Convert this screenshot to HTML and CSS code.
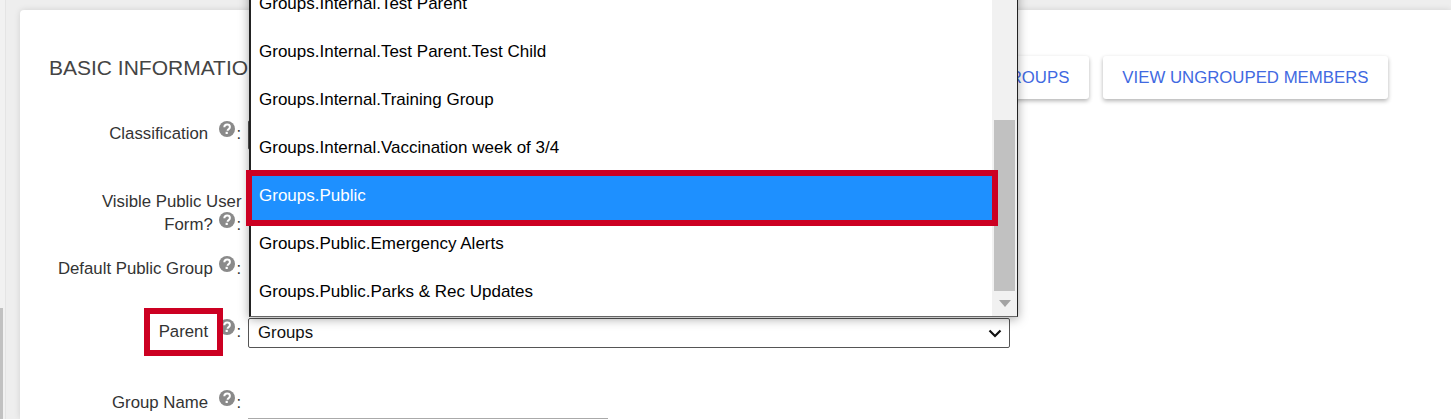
FILE: index.html
```html
<!DOCTYPE html>
<html lang="en">
<head>
    <meta charset="UTF-8">
    <meta name="viewport" content="width=device-width, initial-scale=1.0">
    <title>Group Details</title>
    <link rel="stylesheet" href="styles.css">
</head>
<body>
    <svg class="icon-defs" width="0" height="0">
        <symbol id="help" viewBox="0 0 16 16">
            <circle cx="8" cy="8" r="8" fill="#8a8a8a"/>
            <path d="M5.3 6.2C5.4 4.5 6.6 3.6 8.1 3.6c1.6 0 2.8 1 2.8 2.4 0 1.2-.7 1.8-1.5 2.3-.6.4-.8.7-.8 1.4" fill="none" stroke="#fff" stroke-width="2"/>
            <rect x="6.6" y="10.8" width="2.2" height="2.2" fill="#fff"/>
        </symbol>
    </svg>

    <div class="page">
        <div class="side-strip"><div class="side-thumb"></div></div>

        <div class="card">
            <div class="card-header">
                <h2>BASIC INFORMATION</h2>
                <div class="header-buttons">
                    <button class="flat-button">VIEW ALL GROUPS</button>
                    <button class="flat-button">VIEW UNGROUPED MEMBERS</button>
                </div>
            </div>

            <div class="form">
                <div class="row">
                    <div class="label">Classification &nbsp;<svg class="help"><use href="#help"/></svg><span class="colon">:</span></div>
                    <select class="control wide"><option>Public</option></select>
                </div>
                <div class="row">
                    <div class="label">Visible Public User Form? <svg class="help"><use href="#help"/></svg><span class="colon">:</span></div>
                </div>
                <div class="row">
                    <div class="label">Default Public Group <svg class="help"><use href="#help"/></svg><span class="colon">:</span></div>
                </div>
                <div class="row">
                    <div class="label"><span class="marked">Parent</span> &nbsp;<svg class="help"><use href="#help"/></svg><span class="colon">:</span></div>
                    <div class="control wide parent-select">
                        <span>Groups</span>
                        <svg width="14" height="9" viewBox="0 0 14 9"><path d="M1.5 1.5 7 7l5.5-5.5" fill="none" stroke="#111" stroke-width="2.2"/></svg>
                    </div>
                </div>
                <div class="row">
                    <div class="label">Group Name &nbsp;<svg class="help"><use href="#help"/></svg><span class="colon">:</span></div>
                    <input class="name-input" type="text">
                </div>
            </div>
        </div>

        <div class="dropdown">
            <ul class="options">
                <li>Groups.Internal.Test Parent</li>
                <li>Groups.Internal.Test Parent.Test Child</li>
                <li>Groups.Internal.Training Group</li>
                <li>Groups.Internal.Vaccination week of 3/4</li>
                <li class="selected">Groups.Public</li>
                <li>Groups.Public.Emergency Alerts</li>
                <li>Groups.Public.Parks &amp; Rec Updates</li>
            </ul>
            <div class="scrollbar">
                <div class="scroll-thumb"></div>
                <div class="scroll-arrow"></div>
            </div>
        </div>
    </div>
</body>
</html>
```

FILE: styles.css
```css
* {
    box-sizing: border-box;
}

body {
    margin: 0;
    font-family: "Liberation Sans", Arial, sans-serif;
    font-size: 16.8px;
    color: #333;
    background-color: #eeeeee;
}

.icon-defs {
    position: absolute;
}

.page {
    position: relative;
    display: flex;
    height: 419px;
    overflow: hidden;
}

.side-strip {
    flex: none;
    width: 6px;
    margin-right: 14px;
    background-color: #f1f1f1;
    border-right: 1px solid #e4e4e4;
}

.side-thumb {
    width: 3px;
    height: 112px;
    margin-top: 308px;
    background-color: #c1c1c1;
}

.card {
    flex: 1;
    margin-top: 10px;
    padding: 46px 63px 0 30px;
    background-color: #fff;
    border-radius: 4px 0 0 0;
    box-shadow: 0 0 6px rgba(0, 0, 0, 0.12);
}

.card-header {
    display: flex;
    justify-content: space-between;
    align-items: flex-start;
    height: 66px;
}

.card-header h2 {
    margin: 0 0 0 -1px;
    font-size: 21px;
    font-weight: normal;
    line-height: 24px;
    color: #444;
}

.header-buttons {
    display: flex;
    gap: 14px;
}

.flat-button {
    height: 43px;
    padding: 0 19.5px;
    border: none;
    border-radius: 3px;
    font-family: inherit;
    font-size: 16.8px;
    color: #4169e1;
    background-color: #fff;
    box-shadow: 0 2px 4px rgba(0, 0, 0, 0.3);
}

.form {
    display: grid;
    grid-template-rows: 68px 67px 63px 71px auto;
}

.row {
    display: flex;
    align-items: flex-start;
    gap: 6.5px;
    padding-left: 3.5px;
}

.label {
    flex: none;
    width: 188px;
    line-height: 23px;
    text-align: right;
}

.help {
    width: 16px;
    height: 16px;
    margin: -2px 0 0 2px;
    vertical-align: 2px;
}

.colon {
    margin: 0 0.4px 0 1px;
}

.marked {
    position: relative;
    display: inline-block;
}

/* red callout drawn over the label, it overlaps the help icon */
.marked::after {
    content: "";
    position: absolute;
    top: -12px;
    right: -15px;
    bottom: -13px;
    left: -15px;
    border: 6px solid #cc0022;
}

.control {
    height: 30px;
    margin-top: -2px;
    font-family: inherit;
    font-size: 16.8px;
    color: #111;
    background-color: #fff;
    border: 1px solid #555;
    border-radius: 2px;
}

.wide {
    width: 762px;
}

.parent-select {
    display: flex;
    justify-content: space-between;
    align-items: center;
    padding: 0 7px 0 9px;
}

.name-input {
    width: 360px;
    height: 30px;
    margin-top: 27px;
    border: 1px solid #aaa;
}

.dropdown {
    position: absolute;
    top: -21px;
    left: 249px;
    display: flex;
    width: 769px;
    height: 338px;
    background-color: #fff;
    border: 1px solid #222;
    border-left-width: 2px;
    border-bottom-color: #666;
    box-shadow: 0 2px 10px rgba(0, 0, 0, 0.35);
}

.options {
    flex: 1;
    margin: 0;
    padding: 0;
    font-size: 17px;
    list-style: none;
    color: #000;
}

.options li {
    height: 48px;
    padding-left: 8px;
    line-height: 48px;
}

.options .selected {
    position: relative;
    color: #fff;
    background-color: #1e90ff;
}

.options .selected::after {
    content: "";
    position: absolute;
    top: -2px;
    right: -6px;
    bottom: -6px;
    left: -5px;
    border: 6px solid #cc0022;
}

.scrollbar {
    flex: none;
    width: 25px;
    padding: 140px 2px 0;
    background-color: #f1f1f1;
}

.scroll-thumb {
    height: 171px;
    background-color: #c1c1c1;
}

.scroll-arrow {
    width: 0;
    margin: 9px auto 0;
    border-top: 7px solid #a3a3a3;
    border-left: 6px solid transparent;
    border-right: 6px solid transparent;
}
```
